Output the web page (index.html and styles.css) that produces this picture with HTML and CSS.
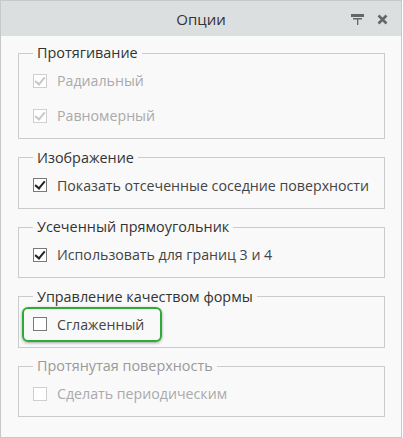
FILE: index.html
```html
<!DOCTYPE html>
<html lang="ru">
  <head>
    <meta charset="UTF-8" />
    <title>Опции</title>
    <link rel="stylesheet" href="styles.css">
  </head>
  <body>
    <div class="window">
      <!-- ======= Title Bar ======= -->
      <div class="titlebar">
        <span class="title">Опции</span>
        <div class="title-icons">
          <svg class="pin" width="14" height="12" viewBox="0 0 14 12">
            <rect x="0" y="0" width="13" height="3" fill="#666" />
            <rect x="2" y="4" width="9" height="1.5" fill="#666" />
            <rect x="6" y="5" width="1.3" height="6" fill="#666" />
          </svg>
          <svg class="close" width="11" height="11" viewBox="0 0 11 11">
            <path d="M1.5 1.5 L9.5 9.5 M9.5 1.5 L1.5 9.5" stroke="#666" stroke-width="2.6" />
          </svg>
        </div>
      </div>

      <!-- ======= Options ======= -->
      <div class="content">
        <fieldset class="group">
          <legend>Протягивание</legend>
          <div class="option disabled">
            <span class="box checked"></span>
            <span>Радиальный</span>
          </div>
          <div class="option disabled">
            <span class="box checked"></span>
            <span>Равномерный</span>
          </div>
        </fieldset>

        <fieldset class="group">
          <legend>Изображение</legend>
          <div class="option">
            <span class="box checked"></span>
            <span>Показать отсеченные соседние поверхности</span>
          </div>
        </fieldset>

        <fieldset class="group">
          <legend>Усеченный прямоугольник</legend>
          <div class="option">
            <span class="box checked"></span>
            <span>Использовать для границ 3 и 4</span>
          </div>
        </fieldset>

        <fieldset class="group">
          <legend>Управление качеством формы</legend>
          <div class="option highlight">
            <span class="box"></span>
            <span>Сглаженный</span>
          </div>
        </fieldset>

        <fieldset class="group disabled-group">
          <legend>Протянутая поверхность</legend>
          <div class="option disabled">
            <span class="box"></span>
            <span>Сделать периодическим</span>
          </div>
        </fieldset>
      </div>
    </div>
  </body>
</html>
```

FILE: styles.css
```css
body {
  margin: 0;
  padding: 0;
  background: #ffffff;
  font-family: "Open Sans", "Noto Sans", Arial, sans-serif;
  color: #333;
}

.window {
  width: 400px;
  height: 436px;
  border: 1px solid #c6c8c9;
  background: #f9f9f9;
  box-sizing: content-box;
}

/* ======= Title Bar ======= */
.titlebar {
  height: 35px;
  background: #dcdfe0;
  display: flex;
  align-items: center;
  justify-content: center;
  position: relative;
}

.title {
  font-size: 15px;
  color: #333;
}

.title-icons {
  position: absolute;
  right: 13px;
  top: 13px;
  display: flex;
  gap: 12px;
  align-items: flex-start;
}

/* ======= Groups ======= */
.content {
  padding: 7px 16px 0 17px;
  display: flex;
  flex-direction: column;
  gap: 8.5px;
}

.group {
  margin: 0;
  border: 1px solid #c9cbcc;
  padding: 0 0 5px 14px;
}

.group legend {
  padding: 0 4px;
  margin-left: 0;
  font-size: 14.4px;
  color: #333;
  line-height: 20px;
}

.disabled-group legend {
  color: #9a9a9a;
}

.option {
  display: flex;
  align-items: center;
  gap: 10px;
  height: 35px;
  font-size: 14.2px;
  color: #444;
}

.option.disabled {
  color: #aaa;
}

.box {
  width: 12px;
  height: 12px;
  border: 1px solid #7a7a7a;
  background: #fff;
  position: relative;
}

.box.checked::after {
  content: "";
  position: absolute;
  left: 3px;
  top: 0px;
  width: 4px;
  height: 8px;
  border-right: 2px solid #222;
  border-bottom: 2px solid #222;
  transform: rotate(40deg);
}

.disabled .box {
  border-color: #cfcfcf;
}

.disabled .box.checked::after {
  border-color: #c8c8c8;
}

.highlight {
  margin-left: -11px;
  padding-left: 9px;
  width: 140px;
  border: 2px solid #2eab37;
  border-radius: 6px;
  box-shadow: 0 1px 3px rgba(0, 0, 0, 0.35);
  box-sizing: border-box;
}
```
